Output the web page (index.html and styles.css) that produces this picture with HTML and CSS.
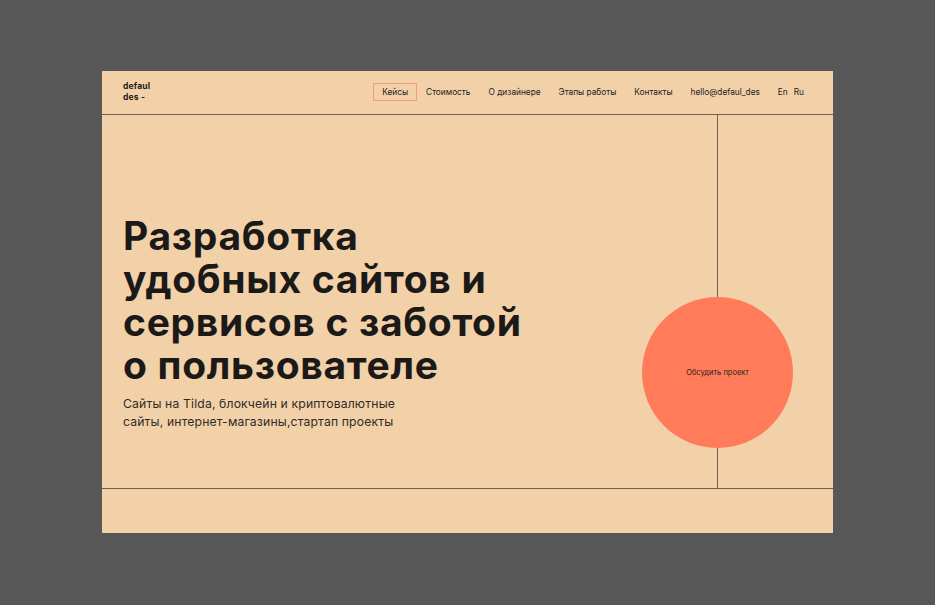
FILE: index.html
```html
<!DOCTYPE html>
<html lang="ru">
<head>
<meta charset="utf-8">
<title>defaul des</title>
<link rel="stylesheet" href="styles.css">
</head>
<body>
<div class="card">
  <header class="header">
    <div class="logo">defaul<br>des -</div>
    <nav class="nav">
      <a class="nav-item active">Кейсы</a>
      <a class="nav-item">Стоимость</a>
      <a class="nav-item">О дизайнере</a>
      <a class="nav-item">Этапы работы</a>
      <a class="nav-item">Контакты</a>
      <a class="nav-item">hello@defaul_des</a>
      <span class="langs"><a class="lang">En</a><a class="lang">Ru</a></span>
    </nav>
  </header>
  <main class="hero">
    <section class="hero-text">
      <h1 class="title"><span class="line">Разработка</span><span class="line">удобных сайтов и</span><span class="line">сервисов с заботой</span><span class="line">о пользователе</span></h1>
      <p class="subtitle">Сайты на Tilda, блокчейн и криптовалютные<br>сайты, интернет-магазины,стартап проекты</p>
    </section>
    <aside class="hero-side">
      <a class="cta">Обсудить проект</a>
    </aside>
  </main>
  <footer class="bottom"></footer>
</div>
</body>
</html>
```
FILE: styles.css
```css
* { box-sizing: border-box; }
html, body { margin: 0; padding: 0; }
body {
  background: #575757;
  padding: 71px 102px;
  font-family: "Inter", "Noto Sans", sans-serif;
  color: #1d1b19;
}
.card {
  width: 731px;
  height: 462px;
  background: #f2d1a9;
  display: flex;
  flex-direction: column;
}
.header {
  height: 44px;
  border-bottom: 1px solid #6e5f4f;
  display: flex;
  align-items: center;
  justify-content: space-between;
  padding: 0 29px 0 21px;
}
.logo {
  font-size: 8.5px;
  font-weight: 700;
  line-height: 11px;
  letter-spacing: 0.2px;
  margin-top: -2px;
}
.nav {
  display: flex;
  align-items: center;
  gap: 18px;
  font-size: 8.3px;
  margin-top: -1px;
}
.nav-item {
  color: #1d1b19;
  white-space: nowrap;
}
.nav-item.active {
  border: 1px solid #f59a7c;
  padding: 3px 8px 3px 8px;
  margin-right: -9px;
}
.langs { display: flex; gap: 6px; }
.lang { color: #1d1b19; }
.hero {
  height: 374px;
  display: flex;
  border-bottom: 1px solid #6e5f4f;
}
.hero-text {
  width: 616px;
  padding: 99px 0 0 21px;
  border-right: 1px solid #6e5f4f;
}
.title {
  margin: 0;
  font-size: 39px;
  font-weight: 700;
  letter-spacing: 0.7px;
  color: #1b1a18;
  display: flex;
  flex-direction: column;
}
.line {
  display: block;
  height: 43px;
  line-height: 43px;
}
.subtitle {
  margin: 9px 0 0 0;
  font-size: 12.2px;
  line-height: 18px;
  letter-spacing: 0.15px;
  color: #2f2b27;
}
.hero-side {
  flex: 1;
  position: relative;
}
.cta {
  position: absolute;
  left: -76px;
  top: 182px;
  width: 151px;
  height: 151px;
  border-radius: 50%;
  background: #ff7b5a;
  display: flex;
  align-items: center;
  justify-content: center;
  font-size: 7.5px;
  color: #2b2520;
}
.bottom { flex: 1; }
```
